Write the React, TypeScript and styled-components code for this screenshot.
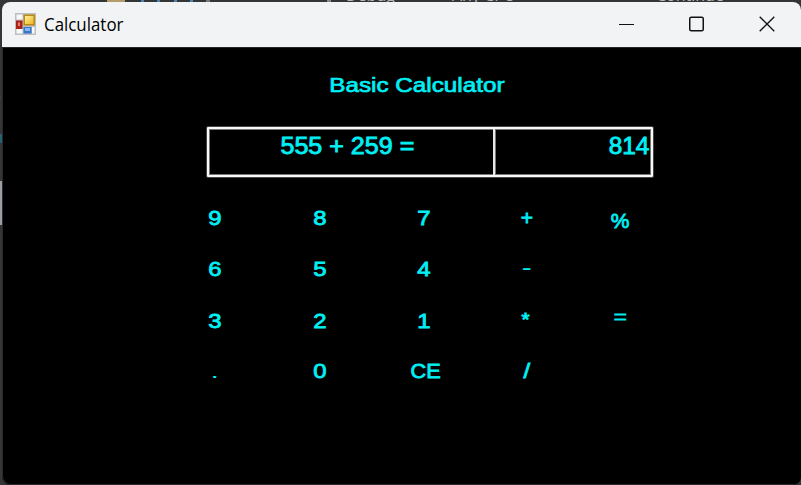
import React from "react";
import styled, { createGlobalStyle } from "styled-components";

const GlobalStyle = createGlobalStyle`
  * { box-sizing: border-box; }
  html, body { margin: 0; padding: 0; overflow: hidden; background: #343536; }
`;

const Desktop = styled.div`
  position: relative;
  width: 801px;
  height: 485px;
  padding: 2px 0 0 2px;
  overflow: hidden;
  background: #343536;
`;

const Peek = styled.span<{ $x: number; $y: number; $size?: number }>`
  position: absolute;
  left: ${(p) => p.$x}px;
  top: ${(p) => p.$y}px;
  font: ${(p) => p.$size ?? 16}px/20px "Open Sans", sans-serif;
  color: #b8b8b8;
  white-space: nowrap;
`;

const Mark = styled.i<{ $x: number; $y: number; $w: number; $h: number; $c: string }>`
  position: absolute;
  left: ${(p) => p.$x}px;
  top: ${(p) => p.$y}px;
  width: ${(p) => p.$w}px;
  height: ${(p) => p.$h}px;
  background: ${(p) => p.$c};
`;

const Window = styled.main`
  position: relative;
  display: flex;
  flex-direction: column;
  width: 799px;
  height: 483px;
  overflow: hidden;
  border-radius: 8px;
  background: #000;
  box-shadow: inset 1px -1px 0 #292929;
`;

const TitleBar = styled.header`
  display: flex;
  align-items: center;
  flex: none;
  height: 46px;
  padding: 0 0 2px 13px;
  background: #f1f3f5;
  border-bottom: 1px solid #252627;
`;

const WindowTitle = styled.h1`
  flex: 1;
  margin: 0 0 0 8px;
  font: 400 18px/24px "Open Sans", sans-serif;
  color: #000;
  span {
    display: inline-block;
    transform: scaleX(0.938);
    transform-origin: left;
  }
`;

const WindowButtons = styled.div`
  display: flex;
  margin-right: -1px;
`;

const WindowButton = styled.button`
  display: flex;
  align-items: center;
  justify-content: center;
  width: 70px;
  height: 43px;
  padding: 0;
  border: 0;
  background: none;
`;

const Form = styled.section`
  display: flex;
  flex-direction: column;
  flex: 1;
`;

const Glyphs = styled.span<{ $size: number; $stretch: number; $weight?: number }>`
  display: inline-block;
  font: 400 ${(p) => p.$size}px/26px "Liberation Sans", Arial, sans-serif;
  color: #00f0f5;
  -webkit-text-stroke: ${(p) => p.$weight ?? 0.8}px #00f0f5;
  white-space: pre;
  transform: scaleX(${(p) => p.$stretch});
`;

const Heading = styled.h2`
  width: 350px;
  height: 26px;
  margin: 23px 0 0 240px;
  text-align: center;
  line-height: 26px;
`;

const Display = styled.div`
  display: flex;
  width: 446px;
  height: 50px;
  margin: 30px 0 0 205px;
  border: 2px solid #f8f8f8;
  border-radius: 1px;
  box-shadow: 0 0 0 1px #444, inset 0 0 0 1px #777;
`;

const Expression = styled.output`
  width: 286px;
  padding: 4px 7px 0 0;
  text-align: center;
  border-right: 2px solid #e8e8e8;
  box-shadow: 1px 0 0 #777;
`;

const Result = styled.output`
  flex: 1;
  padding: 4px 2px 0 0;
  text-align: right;
  span { transform-origin: right; }
`;

const Pad = styled.div`
  display: flex;
  margin: 15px 0 0 160px;
`;

const Keys = styled.div`
  display: grid;
  grid-template-columns: 105px 105px 103px 102px;
  grid-template-rows: 52px 50px 54px 46px;
`;

const SideKeys = styled.div`
  display: grid;
  grid-template-rows: 52px 50px 54px;
  width: 86px;
`;

const Key = styled.button<{ $shift?: number; $nudge?: number }>`
  display: flex;
  align-items: center;
  justify-content: center;
  padding: 0;
  border: 0;
  background: none;
  margin-top: ${(p) => p.$shift ?? 0}px;
  margin-left: ${(p) => p.$nudge ?? 0}px;
`;

const AppIcon = () => (
  <svg width="21" height="22" viewBox="0 0 21 22">
    <defs>
      <linearGradient id="gold" x1="0" y1="0" x2="1" y2="1">
        <stop offset="0" stopColor="#fff0a0" /><stop offset="1" stopColor="#edb51b" />
      </linearGradient>
    </defs>
    <path fill="#bcbec0" d="M0 0h21v22H0z" />
    <path fill="#f7f8fa" d="M1.500 1.500h6v5h-6zM1.500 16h6v4.500h-6zM17 14h2.500v6.500H17z" />
    <path fill="#a92218" d="M1 7.500h6.500V16H1z" />
    <path fill="#e58275" d="M3 9.500h2v3.500H3z" />
    <path fill="#b88a16" d="M8.500 1.500H20v11H8.500z" />
    <path fill="url(#gold)" d="M10 3h8.500v8H10z" />
    <path fill="#3777cb" d="M8.500 14h8v6.500h-8z" />
    <path fill="#83b6f2" d="M10 15h5v3h-5z" />
  </svg>
);

type KeySpec = {
  label: string;
  size?: number;
  stretch?: number;
  weight?: number;
  shift?: number;
  nudge?: number;
};

const MAIN_KEYS: KeySpec[] = [
  { label: "9" }, { label: "8" }, { label: "7" },
  { label: "+", stretch: 1, shift: -1, nudge: 2 },
  { label: "6" }, { label: "5" }, { label: "4" },
  { label: "-", size: 22, stretch: 1.35, weight: 0, shift: -2, nudge: 2 },
  { label: "3" }, { label: "2" }, { label: "1" },
  { label: "*", size: 18, stretch: 1.15, shift: -3, nudge: 0 },
  { label: ".", size: 19, stretch: 1.4, weight: 0.2, shift: 2 },
  { label: "0" },
  { label: "CE", stretch: 1.03, nudge: 4 },
  { label: "/", nudge: 2 },
];

const SIDE_KEYS: KeySpec[] = [
  { label: "%", stretch: 1, shift: 6 },
  { label: "=", stretch: 1.14, weight: 0.2, shift: -9 },
];

function PadKey({ label, size = 21, stretch = 1.14, weight, shift, nudge }: KeySpec) {
  return (
    <Key $shift={shift} $nudge={nudge}>
      <Glyphs $size={size} $stretch={stretch} $weight={weight}>{label}</Glyphs>
    </Key>
  );
}

export default function App() {
  return (
    <>
      <GlobalStyle />
      <Desktop>
        <Peek $x={346} $y={-15}>Debug</Peek>
        <Peek $x={452} $y={-15}>Any CPU</Peek>
        <Peek $x={656} $y={-15}>Continue</Peek>
        <Peek $x={-7} $y={84}>s</Peek>
        <Mark $x={107} $y={0} $w={18} $h={2} $c="#b39b6b" />
        <Mark $x={141} $y={0} $w={3} $h={2} $c="#4d83b4" />
        <Mark $x={157} $y={0} $w={3} $h={2} $c="#4d83b4" />
        <Mark $x={174} $y={0} $w={3} $h={2} $c="#4d83b4" />
        <Mark $x={190} $y={0} $w={3} $h={2} $c="#4d83b4" />
        <Mark $x={206} $y={0} $w={4} $h={2} $c="#777" />
        <Mark $x={327} $y={0} $w={4} $h={2} $c="#888" />
        <Mark $x={0} $y={134} $w={2} $h={9} $c="#266172" />
        <Mark $x={0} $y={181} $w={2} $h={44} $c="#9a9fa5" />
        <Window>
          <TitleBar>
            <AppIcon />
            <WindowTitle><span>Calculator</span></WindowTitle>
            <WindowButtons>
              <WindowButton aria-label="Minimize">
                <svg width="16" height="16"><path d="M0 8.500h15" stroke="#111" /></svg>
              </WindowButton>
              <WindowButton aria-label="Maximize">
                <svg width="16" height="16"><rect x="0.750" y="1.250" width="13.500" height="13.500" rx="1.500" fill="none" stroke="#111" strokeWidth="1.500" /></svg>
              </WindowButton>
              <WindowButton aria-label="Close">
                <svg width="16" height="16"><path d="M.7.7l14.600 14.600M15.300.7L.7 15.300" stroke="#111" strokeWidth="1.300" /></svg>
              </WindowButton>
            </WindowButtons>
          </TitleBar>
          <Form>
            <Heading><Glyphs $size={21} $stretch={1.155} $weight={0.7}>Basic Calculator</Glyphs></Heading>
            <Display>
              <Expression><Glyphs $size={23} $stretch={1.09}>555 + 259 =</Glyphs></Expression>
              <Result><Glyphs $size={23} $stretch={1.06}>814</Glyphs></Result>
            </Display>
            <Pad>
              <Keys>
                {MAIN_KEYS.map((spec) => <PadKey key={spec.label} {...spec} />)}
              </Keys>
              <SideKeys>
                <PadKey {...SIDE_KEYS[0]} />
                <span />
                <PadKey {...SIDE_KEYS[1]} />
              </SideKeys>
            </Pad>
          </Form>
        </Window>
      </Desktop>
    </>
  );
}
